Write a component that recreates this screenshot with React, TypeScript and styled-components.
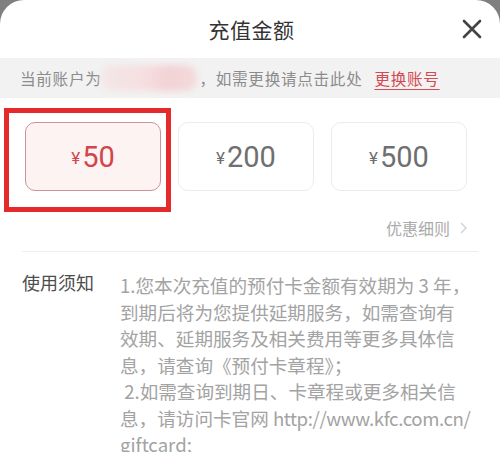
import React, { useState } from "react"
import styled, { createGlobalStyle } from "styled-components"

const GlobalStyle = createGlobalStyle`
  html, body {
    margin: 0;
    padding: 0;
    background: #7f7f7f;
  }
  body {
    font-family: "Noto Sans CJK SC", "Noto Sans", sans-serif;
  }
`

const Page = styled.div`
  width: 500px;
  height: 452px;
  overflow: hidden;
  background: #7f7f7f;
`
const Sheet = styled.div`
  height: 100%;
  background: #ffffff;
  border-radius: 24px 24px 0 0;
  overflow: hidden;
`
const Header = styled.div`
  height: 58px;
  display: grid;
  grid-template-columns: 1fr auto 1fr;
  align-items: center;
  padding: 0 17px 0 20px;
`
const Title = styled.h1`
  grid-column: 2;
  margin: 0;
  font-size: 21px;
  font-weight: 400;
  color: #333;
  letter-spacing: 0.5px;
`
const CloseBtn = styled.button`
  justify-self: end;
  width: 22px;
  height: 22px;
  padding: 0;
  border: none;
  background: none;
  display: flex;
  align-items: center;
  justify-content: center;
  cursor: pointer;
`
const Banner = styled.div`
  height: 40px;
  display: flex;
  align-items: center;
  padding-left: 20px;
  background: #f2f2f2;
  font-size: 15.6px;
  letter-spacing: 0.7px;
  color: #8c8c8c;
`
const Masked = styled.span`
  width: 96px;
  height: 26px;
  margin: 0 2px 0 0;
  border-radius: 12px;
  background: linear-gradient(90deg, #f3e6e7 0%, #f6dfe1 45%, #f2d2d5 70%, #f4dadc 100%);
  filter: blur(3px);
`
const SwitchLink = styled.a`
  margin-left: 12px;
  color: #d24a52;
  text-decoration: underline;
  text-underline-offset: 4px;
  text-decoration-thickness: 1px;
  cursor: pointer;
`
const Amounts = styled.div`
  display: grid;
  grid-template-columns: repeat(3, 136px);
  gap: 17px;
  margin: 24px 0 0 25px;
`
const AmountCard = styled.button<{ $active: boolean }>`
  position: relative;
  height: 69px;
  padding: 0;
  border-radius: 10px;
  border: 1px solid ${p => (p.$active ? "#cf9296" : "#ececec")};
  background: ${p => (p.$active ? "#fdf3f2" : "#ffffff")};
  color: ${p => (p.$active ? "#d1454d" : "#6f6f6f")};
  font-family: Roboto, "Noto Sans", sans-serif;
  display: flex;
  align-items: center;
  justify-content: center;
  cursor: pointer;
`
const Highlight = styled.span`
  position: absolute;
  left: -22px;
  right: -11px;
  top: -15px;
  bottom: -22px;
  border: 5px solid #e52a2c;
  pointer-events: none;
`
const Yen = styled.span`
  font-size: 17px;
  margin-right: 2px;
  margin-top: 3px;
`
const Value = styled.span`
  font-size: 29px;
`
const PromoRow = styled.div`
  display: flex;
  justify-content: flex-end;
  align-items: center;
  gap: 10px;
  margin: 26px 33px 0 0;
  height: 22px;
  font-size: 16px;
  color: #ababab;
`
const Notice = styled.div`
  margin: 12px 22px 0 22px;
  padding-top: 20px;
  border-top: 1px solid #eeeeee;
  display: grid;
  grid-template-columns: 98px 1fr;
  line-height: 26.5px;
`
const NoticeLabel = styled.div`
  font-size: 18px;
  color: #4d4d4d;
  margin-top: -3px;
`
const NoticeBody = styled.div`
  font-size: 18.6px;
  color: #a3a3a3;
  white-space: pre;
`
const Url = styled.span`
  letter-spacing: -0.4px;
`

const amounts = [50, 200, 500]

export default function App() {
  const [selected, setSelected] = useState(50)

  return (
    <Page>
      <GlobalStyle />
      <Sheet>
        <Header>
          <Title>充值金额</Title>
          <CloseBtn aria-label="关闭">
            <svg width="20" height="20" viewBox="0 0 20 20">
              <path d="M2 2 L18 18 M18 2 L2 18" stroke="#444" strokeWidth="2.6" strokeLinecap="round" />
            </svg>
          </CloseBtn>
        </Header>
        <Banner>
          当前账户为
          <Masked />
          ，如需更换请点击此处
          <SwitchLink>更换账号</SwitchLink>
        </Banner>
        <Amounts>
          {amounts.map(a => (
            <AmountCard key={a} $active={selected === a} onClick={() => setSelected(a)}>
              <Yen>¥</Yen>
              <Value>{a}</Value>
              {a === 50 && <Highlight />}
            </AmountCard>
          ))}
        </Amounts>
        <PromoRow>
          优惠细则
          <svg width="7" height="12" viewBox="0 0 7 12">
            <path d="M1 1 L6 6 L1 11" fill="none" stroke="#cfcfcf" strokeWidth="1.3" />
          </svg>
        </PromoRow>
        <Notice>
          <NoticeLabel>使用须知</NoticeLabel>
          <NoticeBody>
            <div>1.您本次充值的预付卡金额有效期为 3 年，</div>
            <div>到期后将为您提供延期服务，如需查询有</div>
            <div>效期、延期服务及相关费用等更多具体信</div>
            <div>息，请查询《预付卡章程》；</div>
            <div> 2.如需查询到期日、卡章程或更多相关信</div>
            <div>
              息，请访问卡官网 <Url>http://www.kfc.com.cn/</Url>
            </div>
            <div>giftcard;</div>
          </NoticeBody>
        </Notice>
      </Sheet>
    </Page>
  )
}
